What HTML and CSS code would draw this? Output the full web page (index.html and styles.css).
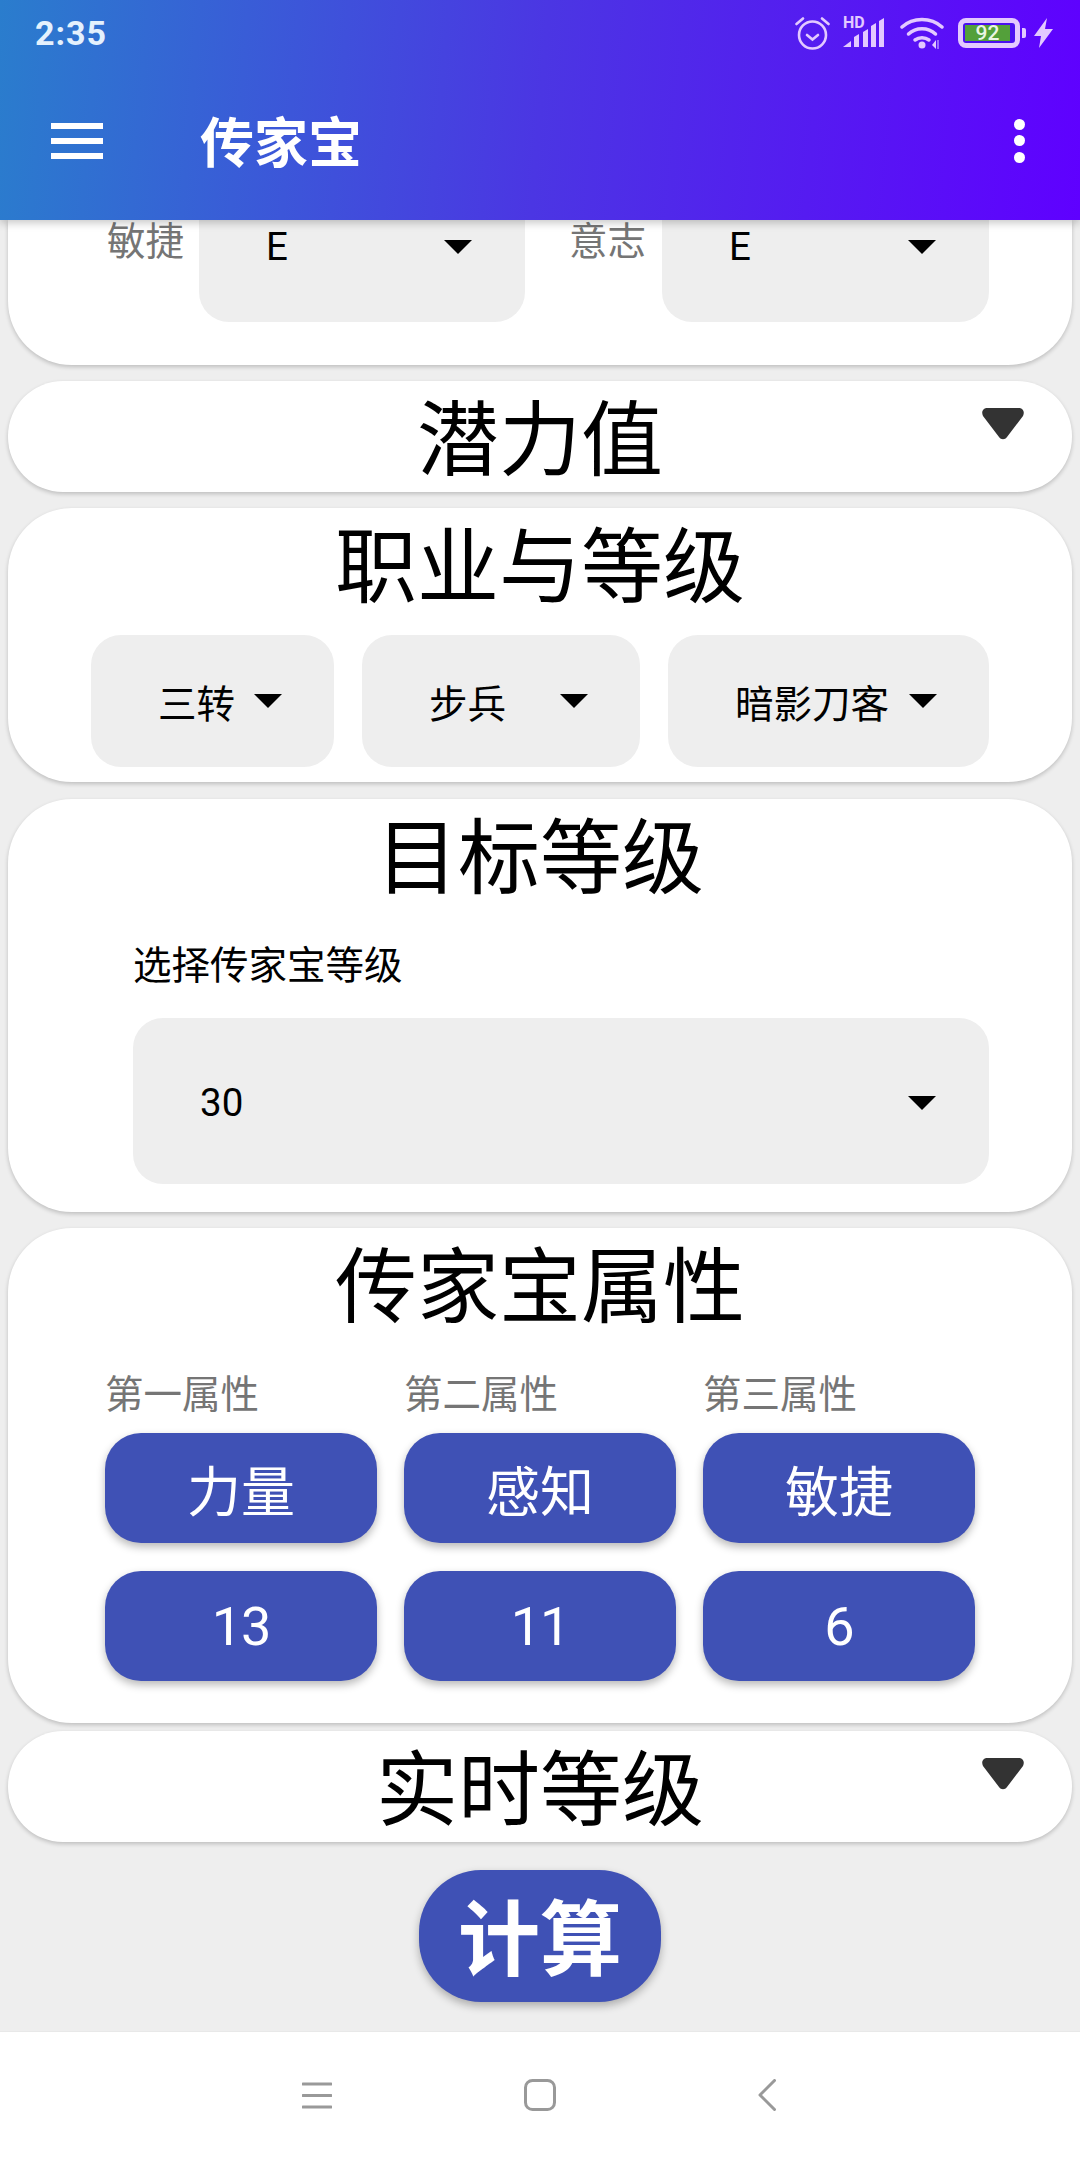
FILE: index.html
```html
<!DOCTYPE html>
<html lang="zh-CN">
<head>
<meta charset="utf-8">
<title>传家宝</title>
<link rel="stylesheet" href="styles.css">
</head>
<body>
<div class="phone">
  <header class="appbar">
    <div class="status">
      <span class="time">2:35</span>
      <div class="status-icons">
        <svg class="ic-alarm" viewBox="0 0 35 34"><g fill="none" stroke="#e3c9ff" stroke-width="2.6" stroke-linecap="round"><circle cx="17.500" cy="19" r="13.500"/><path d="M12 19l5.500 4.500L23 19"/><path d="M1.500 8L8 2.500M33.500 8L27 2.500"/></g></svg>
        <div class="signal">
          <span class="hd">HD</span>
          <svg class="ic-bars" viewBox="0 0 42 30"><g fill="#e3c9ff"><path d="M0 29l8-6v6z"/><path d="M11 29V19l5-3v13z"/><path d="M20 29V14l5-3v18z"/><path d="M28 29V8l5-3v24z"/><path d="M36 29V3l5-3v29z"/></g></svg>
        </div>
        <svg class="ic-wifi" viewBox="0 0 44 34"><g fill="none" stroke="#e3c9ff" stroke-width="3.500" stroke-linecap="round"><path d="M2 11C13 1 31 1 42 11"/><path d="M8.500 18C16 11 28 11 35.500 18"/><path d="M15 24c4-3 10-3 14 0"/></g><circle cx="22" cy="29" r="3.500" fill="#e3c9ff"/><path d="M36 24v9l-4-4z" fill="#e3c9ff"/><path d="M38 24v9" stroke="#9a6cff" stroke-width="2"/></svg>
        <div class="battery">
          <div class="battery-body"><span class="battery-fill">92</span></div>
          <span class="battery-tip"></span>
        </div>
        <svg class="ic-bolt" viewBox="0 0 19 30"><path d="M13 0L0 18h7l-2 12L19 11h-8z" fill="#e3c9ff"/></svg>
      </div>
    </div>
    <div class="toolbar">
      <div class="menu-icon"><span></span><span></span><span></span></div>
      <h1 class="app-title">传家宝</h1>
      <div class="more-icon"><span></span><span></span><span></span></div>
    </div>
  </header>

  <main class="content">
    <section class="card card-clipped">
      <div class="stat-row">
        <span class="field-label">敏捷</span>
        <div class="select select-stat"><span>E</span><i class="caret"></i></div>
        <span class="field-label field-label-second">意志</span>
        <div class="select select-stat"><span>E</span><i class="caret"></i></div>
      </div>
    </section>

    <section class="card card-collapsed">
      <h2 class="card-title">潜力值</h2>
      <svg class="toggle" viewBox="0 0 42 32"><path d="M5 0h32c4 0 6 4 4 8L25 29c-2 3-6 3-8 0L1 8C-1 4 1 0 5 0z" fill="#333"/></svg>
    </section>

    <section class="card card-job">
      <h2 class="card-title">职业与等级</h2>
      <div class="job-row">
        <div class="select select-job"><span>三转</span><i class="caret"></i></div>
        <div class="select select-job"><span>步兵</span><i class="caret"></i></div>
        <div class="select select-job"><span>暗影刀客</span><i class="caret"></i></div>
      </div>
    </section>

    <section class="card card-target">
      <h2 class="card-title">目标等级</h2>
      <p class="target-label">选择传家宝等级</p>
      <div class="select select-target"><span>30</span><i class="caret"></i></div>
    </section>

    <section class="card card-attrs">
      <h2 class="card-title">传家宝属性</h2>
      <div class="attr-grid">
        <span class="field-label">第一属性</span>
        <span class="field-label">第二属性</span>
        <span class="field-label">第三属性</span>
        <div class="chip">力量</div>
        <div class="chip">感知</div>
        <div class="chip">敏捷</div>
        <div class="chip chip-num">13</div>
        <div class="chip chip-num">11</div>
        <div class="chip chip-num">6</div>
      </div>
    </section>

    <section class="card card-collapsed card-live">
      <h2 class="card-title">实时等级</h2>
      <svg class="toggle" viewBox="0 0 42 32"><path d="M5 0h32c4 0 6 4 4 8L25 29c-2 3-6 3-8 0L1 8C-1 4 1 0 5 0z" fill="#333"/></svg>
    </section>

    <div class="calc-wrap"><div class="calc">计算</div></div>
  </main>

  <nav class="navbar">
    <svg class="nav-menu" viewBox="0 0 30 27"><path d="M1 2h28M1 13.500h28M1 25h28" stroke="#999" stroke-width="3" stroke-linecap="round" fill="none"/></svg>
    <svg class="nav-home" viewBox="0 0 32 32"><rect x="1.500" y="1.500" width="29" height="29" rx="7" fill="none" stroke="#999" stroke-width="3"/></svg>
    <svg class="nav-back" viewBox="0 0 18 32"><path d="M16.500 1.500L2 16l14.500 14.500" fill="none" stroke="#999" stroke-width="3" stroke-linecap="round" stroke-linejoin="round"/></svg>
  </nav>
</div>
</body>
</html>
```
FILE: styles.css
```css
* { box-sizing: border-box; }
html, body { margin: 0; padding: 0; }
body {
  width: 1080px;
  height: 2160px;
  overflow: hidden;
  background: #eeeeee;
  font-family: Roboto, "Noto Sans CJK SC", sans-serif;
  color: #000;
}
.phone { display: flex; flex-direction: column; height: 2160px; }

/* App bar */
.appbar {
  height: 220px;
  flex: none;
  position: relative;
  z-index: 2;
  background: linear-gradient(95deg, #2a7dcd 0%, #4b36e3 50%, #5f00ff 100%);
  box-shadow: 0 3px 8px rgba(0, 0, 0, .22);
  color: #fff;
}
.status {
  height: 66px;
  display: flex;
  align-items: center;
  justify-content: space-between;
  padding: 0 27px 0 35px;
}
.time { font-size: 34px; font-weight: 700; color: #e4f1fd; letter-spacing: 1px; }
.status-icons { display: flex; align-items: center; }
.ic-alarm { width: 35px; height: 34px; margin-right: 13px; }
.signal { position: relative; width: 42px; height: 30px; margin-right: 15px; }
.hd { position: absolute; left: 0; top: -2px; font-size: 16px; line-height: 14px; font-weight: 700; color: #e3c9ff; }
.ic-bars { position: absolute; left: 0; top: 0; width: 42px; height: 30px; }
.ic-wifi { width: 44px; height: 34px; margin-right: 14px; }
.battery { display: flex; align-items: center; margin-right: 8px; }
.battery-body {
  width: 62px;
  height: 30px;
  border: 5px solid #e3c9ff;
  border-radius: 8px;
  background: #4a10f0;
  padding: 2px 5px 2px 2px;
  display: flex;
}
.battery-fill {
  flex: 1;
  background: #53a03a;
  color: #eaf5e4;
  font-size: 21px;
  line-height: 16px;
  font-weight: 500;
  text-align: center;
}
.battery-tip { width: 4px; height: 10px; margin-left: 2px; background: #e3c9ff; border-radius: 0 2px 2px 0; }
.ic-bolt { width: 19px; height: 30px; }

.toolbar {
  height: 154px;
  display: flex;
  align-items: center;
  padding: 0 55px 5px 51px;
}
.menu-icon { width: 52px; display: flex; flex-direction: column; gap: 9px; }
.menu-icon span { display: block; height: 6px; background: #fff; }
.app-title {
  margin: 8px 0 0 97px;
  flex: 1;
  font-size: 54px;
  line-height: 60px;
  font-weight: 700;
  color: #fff;
}
.more-icon { display: flex; flex-direction: column; gap: 5.500px; }
.more-icon span { display: block; width: 11px; height: 11px; border-radius: 50%; background: #fff; }

/* Content */
.content {
  flex: 1;
  display: flex;
  flex-direction: column;
  padding: 0 8px;
  min-height: 0;
}
.card {
  position: relative;
  flex: none;
  background: #fff;
  border-radius: 64px;
  box-shadow: 0 2px 4px rgba(0, 0, 0, .2);
  margin-bottom: 16px;
}
.card-title {
  margin: 0;
  font-size: 82px;
  line-height: 120px;
  font-weight: 400;
  text-align: center;
  color: #000;
}
.card-clipped { height: 145px; border-radius: 0 0 64px 64px; }
.stat-row {
  display: grid;
  grid-template-columns: 76px 326px 105px 327px;
  column-gap: 16px;
  padding-left: 99px;
}
.field-label { font-size: 38.500px; line-height: 44px; color: #757575; white-space: nowrap; }
.field-label-second { margin-left: 28px; }

.select {
  display: flex;
  align-items: center;
  justify-content: space-between;
  background: #eeeeee;
  font-size: 38.500px;
  color: #000;
  border-radius: 30px;
}
.caret {
  display: block;
  width: 0;
  height: 0;
  border-left: 14.500px solid transparent;
  border-right: 14.500px solid transparent;
  border-top: 14.500px solid #000;
}
.select-stat {
  height: 102px;
  padding: 0 53px 48px 67px;
  border-radius: 0 0 30px 30px;
  line-height: 44px;
}
.card-collapsed { height: 111px; border-radius: 55px; }
.toggle { position: absolute; right: 48px; top: 27px; width: 42px; height: 32px; }
.card-live { margin-top: -8px; margin-bottom: 28px; }

.card-job { height: 274px; margin-bottom: 17px; }
.job-row {
  display: grid;
  grid-template-columns: 243px 278px 321px;
  column-gap: 28px;
  padding: 7px 0 0 83px;
}
.select-job { height: 132px; padding: 0 52px 0 67px; }

.card-target { height: 413px; }
.target-label {
  margin: 0;
  padding: 25px 0 0 125px;
  font-size: 38.500px;
  line-height: 44px;
  color: #000;
}
.select-target {
  height: 166px;
  margin: 30px 83px 0 125px;
  padding: 3px 53px 0 67px;
}

.card-attrs { height: 495px; }
.attr-grid {
  display: grid;
  grid-template-columns: repeat(3, 272px);
  grid-template-rows: 32px 110px 110px;
  column-gap: 27px;
  row-gap: 28px;
  padding: 25px 0 0 97px;
}
.chip {
  display: flex;
  align-items: center;
  justify-content: center;
  background: #3f51b5;
  color: #fff;
  font-size: 54px;
  border-radius: 36px;
  box-shadow: 0 4px 8px rgba(0, 0, 0, .28);
}
.chip-num { letter-spacing: -1px; }
.calc-wrap { display: flex; justify-content: center; }
.calc {
  width: 242px;
  height: 132px;
  padding-bottom: 6px;
  display: flex;
  align-items: center;
  justify-content: center;
  background: #3f51b5;
  color: #fff;
  font-size: 82px;
  font-weight: 700;
  border-radius: 62px;
  box-shadow: 0 4px 8px rgba(0, 0, 0, .28);
}

/* System nav */
.navbar {
  height: 129px;
  flex: none;
  background: #fff;
  border-top: 1px solid #e8e8e8;
  position: relative;
  display: grid;
  grid-template-columns: 30px 32px 18px;
  column-gap: 192px;
  justify-content: start;
  align-items: center;
  padding: 0 0 2px 302px;
}
.nav-menu { width: 30px; height: 27px; }
.nav-home { width: 32px; height: 32px; }
.nav-back { width: 18px; height: 32px; margin-left: 10px; }
```
